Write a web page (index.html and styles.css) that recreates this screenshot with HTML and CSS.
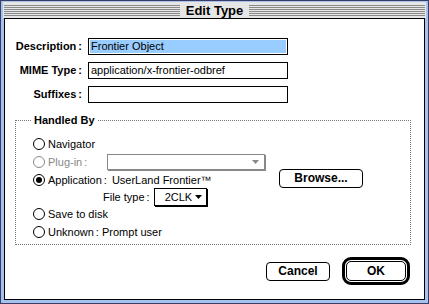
FILE: index.html
```html
<!DOCTYPE html>
<html lang="en">
<head>
    <meta charset="UTF-8">
    <title>Edit Type</title>
    <link rel="stylesheet" href="styles.css">
</head>
<body>

    <div class="window">
        <div class="titlebar">
            <div class="bar">
                <div class="stripes"></div>
                <span class="title">Edit Type</span>
                <div class="stripes"></div>
            </div>
        </div>

        <div class="frame">
            <div class="content">

                <!-- type fields -->
                <div class="fields">
                    <label class="label">Description<span class="colon">:</span></label>
                    <div class="field"><span class="sel">Frontier Object</span></div>

                    <label class="label">MIME Type<span class="colon">:</span></label>
                    <div class="field">application/x-frontier-odbref</div>

                    <label class="label">Suffixes<span class="colon">:</span></label>
                    <div class="field"></div>
                </div>

                <!-- handler choice -->
                <fieldset class="group">
                    <legend>Handled By</legend>

                    <div class="row">
                        <span class="radio"></span>
                        <span>Navigator</span>
                    </div>

                    <div class="row disabled">
                        <span class="radio"></span>
                        <span class="plug-label">Plug-in<span class="colon">:</span></span>
                        <div class="popup wide">
                            <svg width="7" height="4" viewBox="0 0 7 4"><polygon points="0,0 7,0 3.5,4" fill="#888"/></svg>
                        </div>
                    </div>

                    <div class="row app-row">
                        <span class="radio on"></span>
                        <span>Application<span class="colon">:</span></span>
                        <span class="app-name">UserLand Frontier™</span>
                        <button class="btn browse">Browse...</button>
                    </div>

                    <div class="row filetype">
                        <span>File type<span class="colon">:</span></span>
                        <div class="popup small">
                            <span>2CLK</span>
                            <svg width="7" height="4" viewBox="0 0 7 4"><polygon points="0,0 7,0 3.5,4" fill="#000"/></svg>
                        </div>
                    </div>

                    <div class="row">
                        <span class="radio"></span>
                        <span>Save to disk</span>
                    </div>

                    <div class="row">
                        <span class="radio"></span>
                        <span>Unknown<span class="colon">:</span> Prompt user</span>
                    </div>
                </fieldset>

                <div class="actions">
                    <button class="btn cancel">Cancel</button>
                    <div class="default-ring">
                        <button class="btn ok">OK</button>
                    </div>
                </div>

            </div>
        </div>
    </div>

</body>
</html>
```

FILE: styles.css
```css
body {
    margin: 0;
    background: #fff;
    font-family: "Liberation Sans", Arial, sans-serif;
    font-size: 11px;
    color: #000;
}
.window {
    width: 429px;
    height: 304px;
    box-sizing: border-box;
    border: 1px solid #3c3c64;
    background: #a4c2ee;
    display: flex;
    flex-direction: column;
}
.titlebar {
    height: 17px;
    box-sizing: border-box;
    padding: 1px 2px 0;
    display: flex;
}
.bar {
    flex: 1;
    display: flex;
    align-items: center;
    background: #e6e6e6;
    padding: 0 1px;
}
.stripes {
    flex: 1;
    height: 11px;
    background: repeating-linear-gradient(#8a8a8a 0 1px, #e6e6e6 1px 2px);
}
.title {
    font-weight: bold;
    font-size: 13px;
    line-height: 15px;
    padding: 0 6px;
}
.frame {
    flex: 1;
    display: flex;
    padding: 0 3px 3px;
}
.content {
    flex: 1;
    display: flex;
    flex-direction: column;
    background: #fff;
    border: 1px solid #000;
    padding-top: 19px;
}
.colon {
    margin-left: 2px;
}
.fields {
    display: grid;
    grid-template-columns: 77px 200px;
    grid-auto-rows: 17px;
    column-gap: 6px;
    row-gap: 7px;
}
.label {
    font-weight: bold;
    text-align: right;
    line-height: 17px;
}
.field {
    border: 1px solid #000;
    box-sizing: border-box;
    padding: 1px 1px 1px 2px;
    line-height: 13px;
}
.field .sel {
    display: block;
    height: 100%;
    margin-left: -1px;
    padding-left: 1px;
    background: #99ccff;
}
.group {
    margin: 10px 13px 0 10px;
    border: 1px dotted #777;
    padding: 8px 0 3px 17px;
    min-width: 0;
}
.group legend {
    font-weight: bold;
    line-height: 14px;
    padding: 0 3px;
    margin-left: -2px;
}
.row {
    display: flex;
    align-items: center;
    height: 18px;
}
.radio {
    flex: none;
    width: 12px;
    height: 12px;
    box-sizing: border-box;
    border: 1px solid #000;
    border-radius: 50%;
    margin-right: 3px;
    display: flex;
    align-items: center;
    justify-content: center;
}
.radio.on::after {
    content: "";
    width: 6px;
    height: 6px;
    border-radius: 50%;
    background: #000;
}
.disabled {
    color: #888;
}
.disabled .radio {
    border-color: #888;
}
.plug-label {
    width: 59px;
}
.popup {
    box-sizing: border-box;
    display: flex;
    align-items: center;
    background: #fff;
}
.popup.wide {
    width: 158px;
    height: 16px;
    border: 1px solid #888;
    box-shadow: 1px 1px 0 #888;
    justify-content: flex-end;
    padding-right: 5px;
}
.popup.small {
    width: 53px;
    height: 18px;
    margin-left: 4px;
    border: 1px solid #000;
    box-shadow: 1px 1px 0 #000;
    justify-content: space-between;
    padding: 0 4px 0 10px;
}
.app-row {
    padding-right: 47px;
}
.app-name {
    margin-left: 5px;
}
.btn {
    font-family: "Liberation Sans", Arial, sans-serif;
    font-weight: bold;
    font-size: 12px;
    background: #fff;
    color: #000;
    border: 1px solid #000;
    border-radius: 4px;
    padding: 0;
    box-sizing: border-box;
}
.browse {
    margin-left: auto;
    width: 84px;
    height: 19px;
    margin-top: -4px;
}
.filetype {
    padding-left: 70px;
    height: 16px;
}
.actions {
    margin-top: auto;
    display: flex;
    justify-content: flex-end;
    align-items: center;
    gap: 12px;
    padding: 0 14px 14px 0;
}
.cancel {
    width: 64px;
    height: 19px;
}
.default-ring {
    border: 3px solid #000;
    border-radius: 9px;
    padding: 1px;
    display: flex;
}
.ok {
    width: 60px;
    height: 20px;
    border-radius: 5px;
}
```
